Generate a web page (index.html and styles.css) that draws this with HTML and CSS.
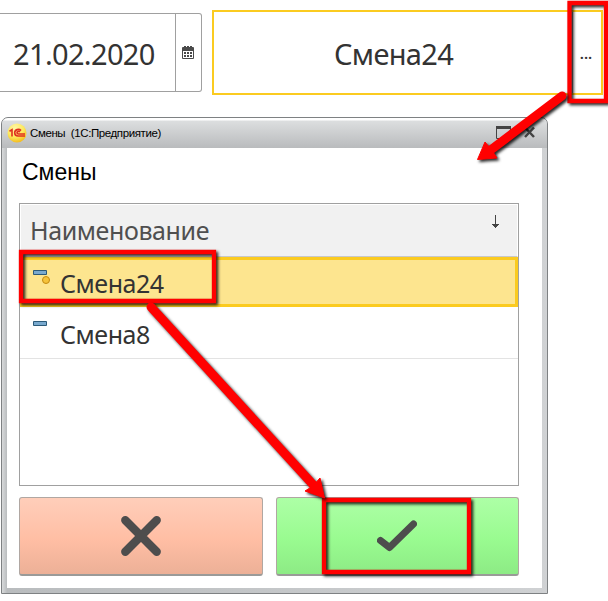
FILE: index.html
```html
<!DOCTYPE html>
<html lang="ru">
<head>
<meta charset="utf-8">
<title>Смены</title>
<link rel="stylesheet" href="styles.css">
</head>
<body>
<div class="page">
  <div class="fields">
    <div class="date-field">
      <div class="date-value"><span>21.02.2020</span></div>
      <div class="date-picker">
        <svg width="12" height="13" viewBox="0 0 12 13"><path fill="#4a4a4a" fill-rule="evenodd" d="M0 2Q0 1 1 1H2V0H4V1H5V0H7V1H8V0H10V1H11Q12 1 12 2V12Q12 13 11 13H1Q0 13 0 12ZM1 5V12H11V5Z"/><path fill="#4a4a4a" d="M2 6h2v2H2zM5 6h2v2H5zM8 6h2v2H8zM2 9h2v2H2zM5 9h2v2H5zM8 9h2v2H8z"/></svg>
      </div>
    </div>
    <div class="shift-field">
      <div class="shift-value"><span>Смена24</span></div>
      <div class="shift-more">...</div>
    </div>
  </div>
  <div class="window">
    <div class="titlebar">
      <svg class="logo" width="20" height="20" viewBox="0 0 20 20">
        <defs><radialGradient id="logo" cx=".4" cy=".25" r=".75"><stop offset="0" stop-color="#fff6a8"/><stop offset=".6" stop-color="#fde95c"/><stop offset="1" stop-color="#f4bd22"/></radialGradient></defs>
        <circle cx="10" cy="10" r="9.5" fill="url(#logo)"/>
        <path d="M2.5 8.2L5 6.7V13.5M14 7.6C12 5.4 7.7 6.5 7.7 9.8C7.7 12 9.2 13 11 13H18M13 9C11.5 7.8 10 8.6 10 9.8C10 10.8 10.7 11 11.5 11H18" fill="none" stroke="#df3020" stroke-width="1.6"/>
      </svg>
      <span class="title">Смены&nbsp; (1С:Предприятие)</span>
      <svg class="controls" width="42" height="14" viewBox="0 0 42 14"><path d="M.5 1V12.5H14.5V1" fill="none" stroke="#444"/><path d="M0 0H15V3H0Z" fill="#444"/><path d="M29 1.5L38 11M38 1.5L29 11" stroke="#444" stroke-width="2.5"/></svg>
    </div>
    <div class="content">
      <h1>Смены</h1>
      <div class="list">
        <div class="list-head"><span>Наименование</span>
          <svg width="7" height="13" viewBox="0 0 7 13"><path d="M3 0H4V9H7V10H6V11H5V12H4V13H3V12H2V11H1V10H0V9H3Z" fill="#444"/></svg>
        </div>
        <div class="row selected">
          <svg width="18" height="16" viewBox="0 0 18 16"><path d="M.5 .5H13.5V4.5H.5Z" fill="#79a9ce" stroke="#2c5a79"/><circle cx="13" cy="10" r="3.5" fill="#f5c33b" stroke="#c48a10"/></svg>
          <span>Смена24</span>
        </div>
        <div class="row">
          <svg width="18" height="16" viewBox="0 0 18 16"><path d="M.5 .5H13.5V4.5H.5Z" fill="#79a9ce" stroke="#2c5a79"/></svg>
          <span>Смена8</span>
        </div>
      </div>
      <div class="buttons">
        <div class="button cancel"><svg width="40" height="40" viewBox="0 0 40 40"><path d="M4.3 4.3L35.7 35.7M35.7 4.3L4.3 35.7" stroke="#4d4d4d" stroke-width="8.4" stroke-linecap="round"/></svg></div>
        <div class="button accept"><svg width="40" height="32" viewBox="0 0 40 32"><path d="M3.5 20.5L12.5 27.5L36.5 4" fill="none" stroke="#4d4d4d" stroke-width="7" stroke-linecap="round" stroke-linejoin="round"/></svg></div>
      </div>
    </div>
  </div>
  <svg class="marks" width="608" height="601" viewBox="0 0 608 601">
    <g class="mark"><path d="M569.5 3H606V101H569.5Z"/></g>
    <g class="mark"><path d="M21 252H214V301H21Z"/></g>
    <g class="mark"><path d="M324 500H469V572H324Z"/></g>
    <g class="mark"><path class="shaft" d="M562 96L488 152"/><path class="tip" d="M477.5 159.5L485 142L491 149L497 158Z"/></g>
    <g class="mark"><path class="shaft" d="M151 307L317 489"/><path class="tip" d="M324.5 498L305 491L313 486L320 478Z"/></g>
  </svg>
</div>
</body>
</html>
```
FILE: styles.css
```css
* { box-sizing: border-box; }
body { margin: 0; background: #fff; font-family: "Noto Sans", sans-serif; color: #333; }
svg { display: block; flex: none; }
.page { position: relative; width: 608px; height: 601px; overflow: hidden; }
.fields { display: flex; align-items: center; gap: 10px; height: 117px; padding-bottom: 12px; }
.date-field { display: flex; width: 202px; height: 79px; border: 1px solid #a0a0a0; border-left: 0; border-radius: 0 3px 3px 0; }
.date-value { width: 175px; padding: 19px 0 0 13px; font-size: 29px; line-height: 42px; letter-spacing: -0.65px; white-space: nowrap; }
.date-picker { flex: 1; display: flex; align-items: center; justify-content: center; border-left: 1px solid #a0a0a0; padding-right: 2px; }
.shift-field { display: flex; width: 391px; height: 85px; border: 2px solid #fbcb20; }
.shift-value { width: 358px; padding: 21px 0 0 120px; font-size: 29px; line-height: 42px; letter-spacing: -0.7px; }
.shift-more { flex: 1; display: flex; align-items: center; justify-content: center; border-left: 1px solid #a0a0a0; font-size: 15px; font-weight: 600; padding: 0 2px 0 0; }
.window { width: 547px; height: 477px; margin-left: 1px; padding: 0 5px 5px; border: 1px solid #7e8183; border-radius: 7px 7px 0 0; background: linear-gradient(90deg, #d8dadb, #b9bcbe 5px, #cfd1d3 540px, #d0d2d4); }
.titlebar { display: flex; align-items: center; height: 30px; margin: 0 -5px; padding: 0 12px 0 5px; border-radius: 6px 6px 0 0; background: linear-gradient(#fff 0, #fff 2px, #dcdedf 3px, #b9bbbd 100%); }
.title { margin-left: 3px; color: #000; font: 11.5px/16px "Liberation Sans", sans-serif; letter-spacing: -0.4px; white-space: nowrap; }
.controls { margin-left: auto; margin-right: -3px; }
.content { height: 440px; padding: 9px 23px 0 12px; background: #fff; }
h1 { margin: 0; padding-left: 3px; color: #000; font: 23px/31px "Liberation Sans", sans-serif; }
.list { height: 283px; margin-top: 15px; border: 1px solid #a0a0a0; font-size: 25px; }
.list-head { display: flex; justify-content: space-between; height: 53px; padding: 7px 18px 0 9px; border: 1px solid #fff; border-bottom-color: #c8c8c8; background: #f1f1f1; color: #4f4f4f; line-height: 36px; letter-spacing: -0.4px; }
.list-head svg { margin-top: 3px; }
.row { display: flex; height: 52px; padding: 11px 0 0 13px; border-bottom: 1px solid #e3e3e3; line-height: 36px; letter-spacing: -0.45px; }
.row svg { margin-top: 3px; }
.row span { margin-left: 9px; margin-top: -2px; }
.selected { height: 50px; border: 3px solid #fbcb20; background: #fde58f; padding: 8px 0 0 10px; }
.selected svg { margin-top: 2px; }
.selected span { margin-top: -3px; }
.buttons { display: grid; grid-template-columns: 244px 243px; gap: 13px; margin-top: 11px; }
.button { display: flex; align-items: center; justify-content: center; height: 79px; border: 1px solid #b0a7a2; border-bottom: 2px solid #9a9a98; border-radius: 3px; }
.cancel { background: linear-gradient(#ffceba, #ffbea4 55%, #ecb097); }
.accept { padding-right: 2px; background: linear-gradient(#adffa6, #99fb90 55%, #8deb85); }
.marks { position: absolute; left: 0; top: 0; pointer-events: none; }
.mark { fill: none; stroke: #f00; stroke-width: 4.3; filter: drop-shadow(2px 2px 1.5px rgba(0, 0, 0, .85)); }
.mark .shaft { stroke-width: 9; stroke-linecap: round; }
.mark .tip { fill: #f00; stroke-width: 1; stroke-linejoin: round; }
```
